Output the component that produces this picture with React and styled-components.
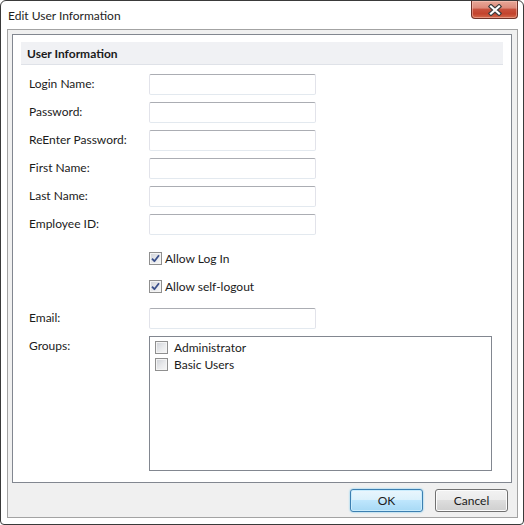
import React from "react";
import styled, { createGlobalStyle } from "styled-components";

const GlobalStyle = createGlobalStyle`
  html, body {
    margin: 0;
    padding: 0;
    background: #ffffff;
  }
  * {
    box-sizing: border-box;
  }
  body {
    font-family: Lato, "Liberation Sans", sans-serif;
    font-size: 12px;
    color: #1b1b1b;
  }
`;

const fields = [
  { label: "Login Name:" },
  { label: "Password:", type: "password" },
  { label: "ReEnter Password:", type: "password" },
  { label: "First Name:" },
  { label: "Last Name:" },
  { label: "Employee ID:" },
];

const groups = ["Administrator", "Basic Users"];

const CheckMark = () => (
  <svg width="9" height="9" viewBox="0 0 9 9">
    <path
      d="M1 4.6 L3.4 7.2 L8 1.2"
      fill="none"
      stroke="#3a4f8a"
      strokeWidth="1.8"
      strokeLinejoin="round"
    />
  </svg>
);

const CloseGlyph = () => (
  <svg width="14" height="12" viewBox="0 0 14 12">
    <g strokeLinecap="square">
      <path d="M3 2.5 L11 9.5 M11 2.5 L3 9.5" stroke="#3d3d3d" strokeWidth="4.4" />
      <path d="M3 2.5 L11 9.5 M11 2.5 L3 9.5" stroke="#ffffff" strokeWidth="2.2" />
    </g>
  </svg>
);

const Checkbox = ({ checked }) => (
  <Box>{checked && <CheckMark />}</Box>
);

const App = () => {
  return (
    <>
      <GlobalStyle />
      <Window>
        <TitleBar>
          <Title>Edit User Information</Title>
          <CloseButton aria-label="Close">
            <CloseGlyph />
          </CloseButton>
        </TitleBar>

        <Client>
          <Panel>
            <SectionHeader>User Information</SectionHeader>
            <Form>
              {fields.map((f) => (
                <Row key={f.label}>
                  <Label>{f.label}</Label>
                  <TextInput type={f.type || "text"} />
                </Row>
              ))}

              <Row $extra={6}>
                <span />
                <CheckLabel>
                  <Checkbox checked />
                  Allow Log In
                </CheckLabel>
              </Row>
              <Row>
                <span />
                <CheckLabel>
                  <Checkbox checked />
                  Allow self-logout
                </CheckLabel>
              </Row>

              <Row $extra={4}>
                <Label>Email:</Label>
                <TextInput type="text" />
              </Row>

              <Row $top>
                <Label $top>Groups:</Label>
                <ListBox>
                  {groups.map((g) => (
                    <ListItem key={g}>
                      <Checkbox />
                      {g}
                    </ListItem>
                  ))}
                </ListBox>
              </Row>
            </Form>
          </Panel>

          <Footer>
            <Button $primary>OK</Button>
            <Button>Cancel</Button>
          </Footer>
        </Client>
      </Window>
    </>
  );
};

export default App;

const Window = styled.div`
  width: 524px;
  height: 525px;
  display: flex;
  flex-direction: column;
  background: #ffffff;
  border: 1px solid #3a3a3a;
  border-radius: 6px 6px 4px 4px;
  overflow: hidden;
`;

const TitleBar = styled.div`
  height: 28px;
  flex: none;
  display: flex;
  justify-content: space-between;
  align-items: flex-start;
`;

const Title = styled.div`
  padding: 7px 0 0 7px;
  line-height: 15px;
  font-size: 12px;
  color: #1e1e1e;
`;

const CloseButton = styled.div`
  width: 47px;
  height: 18px;
  margin-right: 5px;
  display: flex;
  align-items: center;
  justify-content: center;
  border: 1px solid #6e3228;
  border-top: none;
  border-radius: 0 0 4px 4px;
  background: linear-gradient(
    #e8a898 0%,
    #dd8b7b 40%,
    #c8513d 50%,
    #c3432d 75%,
    #d46a4c 100%
  );
  box-shadow: inset 0 0 0 1px rgba(255, 210, 200, 0.45);
`;

const Client = styled.div`
  flex: 1;
  margin: 0 5px 6px 6px;
  padding: 4px 5px 0 4px;
  display: flex;
  flex-direction: column;
  background: #f0f0f0;
  border: 1px solid #a3a3a3;
`;

const Panel = styled.div`
  flex: 1;
  padding: 7px 8px 0 8px;
  background: #ffffff;
  border: 1px solid #828790;
`;

const SectionHeader = styled.div`
  height: 23px;
  padding-left: 6px;
  display: flex;
  align-items: center;
  font-weight: 700;
  background: #f0f1f4;
  border-bottom: 1px solid #dfe2e8;
  color: #1b1b1b;
`;

const Form = styled.div`
  margin-top: 9px;
  padding-left: 8px;
  display: flex;
  flex-direction: column;
  gap: 7px;
`;

const Row = styled.div`
  display: grid;
  grid-template-columns: 120px 1fr;
  align-items: ${(p) => (p.$top ? "start" : "center")};
  min-height: 21px;
  margin-top: ${(p) => p.$extra || 0}px;
`;

const Label = styled.div`
  line-height: 16px;
  padding-top: ${(p) => (p.$top ? "2px" : "0")};
  margin-top: ${(p) => (p.$top ? "0" : "-1px")};
`;

const TextInput = styled.input`
  width: 167px;
  height: 21px;
  margin: 0;
  padding: 0 3px;
  font: inherit;
  background: #ffffff;
  border: 1px solid #e2e3ea;
  border-top-color: #abadb3;
  border-bottom-color: #e3e9ef;
  border-radius: 2px;
  outline: none;
`;

const Box = styled.span`
  width: 13px;
  height: 13px;
  flex: none;
  display: inline-flex;
  align-items: center;
  justify-content: center;
  border: 1px solid #8f8f8f;
  background: linear-gradient(135deg, #cdd0d6 0%, #e9eaec 55%, #f7f7f7 100%);
  box-shadow: inset 0 0 0 1px #f4f4f4;
`;

const CheckLabel = styled.label`
  display: flex;
  align-items: center;
  gap: 3px;
  line-height: 16px;
`;

const ListBox = styled.div`
  width: 343px;
  height: 135px;
  padding: 2px 5px;
  border: 1px solid #828790;
  background: #ffffff;
`;

const ListItem = styled.label`
  height: 17px;
  display: flex;
  align-items: center;
  gap: 6px;
`;

const Footer = styled.div`
  height: 34px;
  flex: none;
  display: flex;
  justify-content: flex-end;
  align-items: flex-start;
  gap: 12px;
  padding: 6px 4px 0 0;
`;

const Button = styled.button`
  width: 73px;
  height: 23px;
  margin: 0;
  padding: 0;
  font: inherit;
  color: #1b1b1b;
  border-radius: 3px;
  border: 1px solid ${(p) => (p.$primary ? "#3c7fb1" : "#707070")};
  background: ${(p) =>
    p.$primary
      ? "linear-gradient(#eaf6fd 0%, #d9f0fc 50%, #bee6fd 50%, #a7d9f5 100%)"
      : "linear-gradient(#f2f2f2 0%, #ebebeb 50%, #dddddd 50%, #cfcfcf 100%)"};
  box-shadow: ${(p) =>
    p.$primary
      ? "inset 0 0 0 1px #c9ecfd, 0 0 2px #5bc0f0"
      : "inset 0 0 0 1px #fcfcfc"};
`;
